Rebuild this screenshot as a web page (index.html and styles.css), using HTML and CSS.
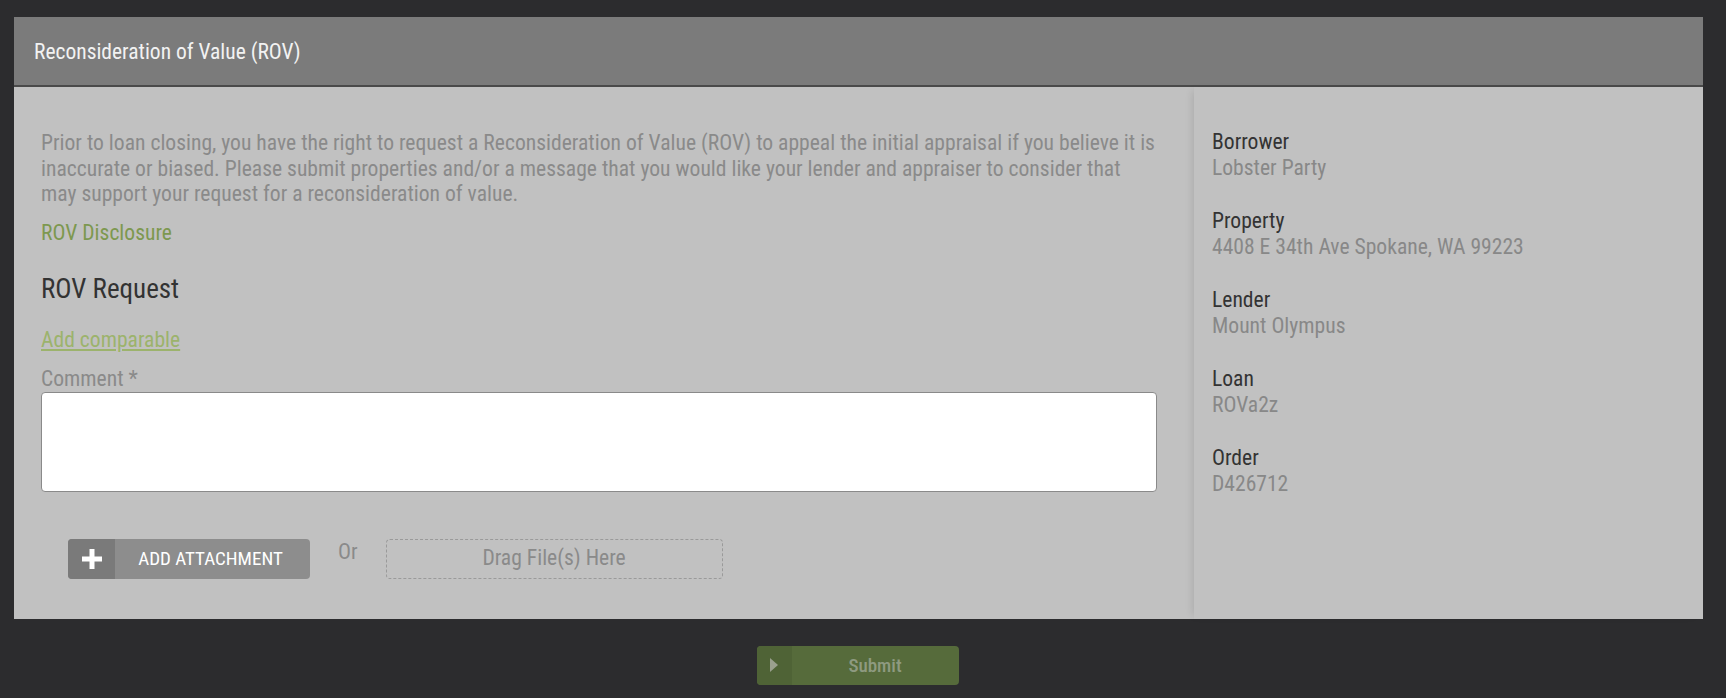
FILE: index.html
```html
<!DOCTYPE html>
<html>
<head>
<meta charset="utf-8">
<link rel="stylesheet" href="styles.css">
</head>
<body>
<div class="page">
  <section class="panel">
    <header class="panel-head">Reconsideration of Value (ROV)</header>
    <div class="panel-body">
      <div class="main">
        <p class="intro">Prior to loan closing, you have the right to request a Reconsideration of Value (ROV) to appeal the initial appraisal if you believe it is inaccurate or biased. Please submit properties and/or a message that you would like your lender and appraiser to consider that may support your request for a reconsideration of value.</p>
        <a class="disclosure">ROV Disclosure</a>
        <h2 class="req-title">ROV Request</h2>
        <a class="add-comp">Add comparable</a>
        <label class="comment-label">Comment *</label>
        <textarea class="comment"></textarea>
        <div class="attach-row">
          <button class="attach-btn"><span class="attach-icon"><svg width="20" height="20" viewBox="0 0 20 20"><path d="M10 0v20M0 10h20" stroke="#fff" stroke-width="5" fill="none"/></svg></span><span class="attach-text">ADD ATTACHMENT</span></button>
          <span class="or">Or</span>
          <div class="drop">Drag File(s) Here</div>
        </div>
      </div>
      <aside class="side">
        <div class="info"><div class="lbl">Borrower</div><div class="val">Lobster Party</div></div>
        <div class="info"><div class="lbl">Property</div><div class="val">4408 E 34th Ave Spokane, WA 99223</div></div>
        <div class="info"><div class="lbl">Lender</div><div class="val">Mount Olympus</div></div>
        <div class="info"><div class="lbl">Loan</div><div class="val">ROVa2z</div></div>
        <div class="info"><div class="lbl">Order</div><div class="val">D426712</div></div>
      </aside>
    </div>
  </section>
  <div class="actions">
    <button class="submit"><span class="submit-icon"><svg width="8" height="14" viewBox="0 0 8 14"><path d="M0 0l8 7-8 7z" fill="#9aa08e"/></svg></span><span class="submit-text">Submit</span></button>
  </div>
</div>
</body>
</html>
```
FILE: styles.css
```css
* { box-sizing: border-box; }
html, body { margin: 0; padding: 0; }
body {
  background: #2c2c2e;
  font-family: "Roboto Condensed", "Roboto", "Liberation Sans Narrow", sans-serif;
  font-stretch: condensed;
  width: 1726px;
  height: 698px;
  overflow: hidden;
}
.page { padding: 17px 23px 0 14px; }
.panel { background: #c1c1c1; }
.panel-head {
  background: #7b7b7b;
  height: 70px;
  border-bottom: 2px solid #4a4a4a;
  color: #f2f2f2;
  font-size: 21.5px;
  padding: 0 20px;
  display: flex;
  align-items: center;
}
.panel-body { display: flex; }
.main {
  width: 1180px;
  padding: 43px 37px 40px 27px;
  display: flex;
  flex-direction: column;
  align-items: flex-start;
}
.intro {
  margin: 0;
  font-size: 21.6px;
  line-height: 25.5px;
  color: #8a8a8a;
}
.disclosure {
  margin-top: 13px;
  font-size: 21.6px;
  line-height: 26px;
  color: #7d984f;
}
.req-title {
  margin: 28px 0 0;
  font-weight: normal;
  font-size: 27px;
  line-height: 30px;
  color: #333;
}
.add-comp {
  margin-top: 23px;
  font-size: 21.6px;
  line-height: 26px;
  color: #9cb36c;
  text-decoration: underline;
}
.comment-label {
  margin-top: 13px;
  font-size: 21.6px;
  line-height: 26px;
  color: #8a8a8a;
}
.comment {
  width: 100%;
  height: 100px;
  background: #fff;
  border: 1px solid #8a8a8a;
  border-radius: 4px;
  resize: none;
  margin: 0;
}
.attach-row {
  margin: 47px 0 0 27px;
  display: flex;
  align-items: center;
}
.attach-btn {
  display: flex;
  height: 40px;
  width: 242px;
  padding: 0;
  border: none;
  border-radius: 4px;
  overflow: hidden;
  background: #8d8d8d;
  font-family: inherit;
  font-stretch: condensed;
}
.attach-icon {
  width: 47px;
  background: #7a7a7a;
  display: flex;
  align-items: center;
  justify-content: center;
}
.attach-text {
  flex: 1;
  display: flex;
  align-items: center;
  justify-content: center;
  color: #fff;
  font-size: 19px;
  padding-right: 4px;
}
.or {
  margin: 0 28px;
  font-size: 21.6px;
  color: #8a8a8a;
  position: relative;
  top: -7px;
}
.drop {
  width: 337px;
  height: 40px;
  border: 1px dashed #9a9a9a;
  border-radius: 4px;
  display: flex;
  align-items: center;
  justify-content: center;
  font-size: 21.6px;
  color: #8a8a8a;
  padding-bottom: 2px;
}
.side {
  flex: 1;
  padding: 42px 18px;
  box-shadow: -5px 0 8px -4px rgba(0,0,0,0.12);
}
.info { margin-bottom: 27px; }
.lbl { font-size: 21.6px; line-height: 26px; color: #333; }
.val { font-size: 21.6px; line-height: 26px; color: #888; }
.actions {
  display: flex;
  justify-content: center;
  padding-top: 27px;
}
.submit {
  display: flex;
  width: 202px;
  height: 39px;
  padding: 0;
  border: none;
  border-radius: 4px;
  overflow: hidden;
  background: #566b3b;
  font-family: inherit;
  margin-left: -2px;
}
.submit-icon {
  width: 35px;
  background: #4f6336;
  display: flex;
  align-items: center;
  justify-content: center;
}
.submit-text {
  flex: 1;
  display: flex;
  align-items: center;
  justify-content: center;
  color: #8e9a80;
  font-size: 19px;
  font-weight: 500;
}
```
